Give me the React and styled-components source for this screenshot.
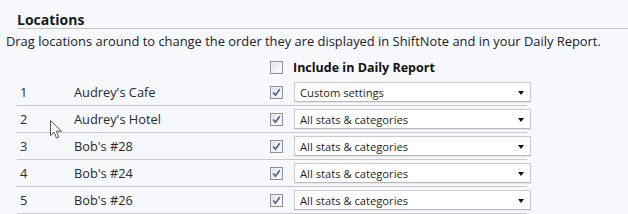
import React from "react";
import styled, { createGlobalStyle } from "styled-components";

const Global = createGlobalStyle`
  html, body { margin: 0; padding: 0; background: #f7f8fc; }
  body { font-family: "Open Sans", "Noto Sans", Arial, sans-serif; color: #222; }
`;

const Page = styled.div`
  position: relative;
  width: 628px;
  height: 214px;
  overflow: hidden;
  background: #f7f8fc;
`;

const Title = styled.h2`
  margin: 0 0 0 17px;
  padding-top: 11px;
  height: 17px;
  font-size: 14px;
  line-height: 17px;
  font-weight: 700;
  color: #1a1a1a;
  border-bottom: 1px solid #c3c4c8;
`;

const Description = styled.p`
  margin: 0 0 0 6px;
  padding-top: 5px;
  height: 15px;
  font-size: 12.9px;
  line-height: 15px;
  color: #222;
  white-space: nowrap;
`;

const Table = styled.div`
  margin-left: 17px;
  width: 510px;
  margin-top: 8px;
`;

const Row = styled.div`
  display: grid;
  grid-template-columns: 57px 196px 24px 237px;
  align-items: center;
  height: ${(p) => (p.$header ? "21px" : "26px")};
  border-bottom: ${(p) => (p.$header ? "none" : "1px solid #c7c8cc")};
  padding-bottom: ${(p) => (p.$header ? "1px" : "0")};
  font-size: 12.8px;
  color: #2a2a2a;
`;

const Num = styled.span`
  padding-left: 3px;
`;

const Name = styled.span``;

const HeaderLabel = styled.span`
  font-weight: 700;
  font-size: 12.5px;
  color: #111;
  margin-left: -1px;
  white-space: nowrap;
`;

const Box = styled.span`
  display: inline-flex;
  align-items: center;
  justify-content: center;
  box-sizing: border-box;
  width: 13px;
  height: 13px;
  border: 1px solid #8f9092;
  background: linear-gradient(135deg, #dcdde0 0%, #f4f4f6 60%, #ffffff 100%);
  box-shadow: inset 0 0 0 1px #f2f2f4;
`;

const Check = ({ checked }) => (
  <Box>
    {checked && (
      <svg width="9" height="9" viewBox="0 0 9 9">
        <path d="M1.2 4.6 L3.4 7.2 L7.8 1.2" fill="none" stroke="#4c5e92" strokeWidth="1.6" />
      </svg>
    )}
  </Box>
);

const Select = styled.div`
  box-sizing: border-box;
  height: 20px;
  width: 237px;
  display: flex;
  align-items: center;
  justify-content: space-between;
  padding: 0 6px 0 5px;
  background: #ffffff;
  border: 1px solid #c9cacd;
  border-bottom-color: #b8b9bd;
  box-shadow: 0 1px 0 #e6e7ea;
  font-size: 11.2px;
  color: #1f1f1f;
`;

const Arrow = styled.span`
  width: 0;
  height: 0;
  border-left: 3.5px solid transparent;
  border-right: 3.5px solid transparent;
  border-top: 4px solid #111;
  margin-top: 1px;
`;

const Cursor = styled.svg`
  position: absolute;
  left: 50px;
  top: 120px;
`;

const rows = [
  ["1", "Audrey's Cafe", "Custom settings"],
  ["2", "Audrey's Hotel", "All stats & categories"],
  ["3", "Bob's #28", "All stats & categories"],
  ["4", "Bob's #24", "All stats & categories"],
  ["5", "Bob's #26", "All stats & categories"],
];

export default function App() {
  return (
    <Page>
      <Global />
      <Title>Locations</Title>
      <Description>
        Drag locations around to change the order they are displayed in ShiftNote and in your Daily Report.
      </Description>
      <Table>
        <Row $header>
          <span />
          <span />
          <Check checked={false} />
          <HeaderLabel>Include in Daily Report</HeaderLabel>
        </Row>
        {rows.map(([n, name, opt]) => (
          <Row key={n}>
            <Num>{n}</Num>
            <Name>{name}</Name>
            <Check checked />
            <Select>
              <span>{opt}</span>
              <Arrow />
            </Select>
          </Row>
        ))}
      </Table>
      <Cursor width="13" height="19" viewBox="0 0 13 19">
        <path
          d="M0.5 0.5 L0.5 15.5 L4 12 L6.5 18 L8.8 17 L6.3 11.2 L11.5 11.2 Z"
          fill="#ffffff"
          stroke="#555"
          strokeWidth="1"
          strokeLinejoin="round"
        />
      </Cursor>
    </Page>
  );
}
